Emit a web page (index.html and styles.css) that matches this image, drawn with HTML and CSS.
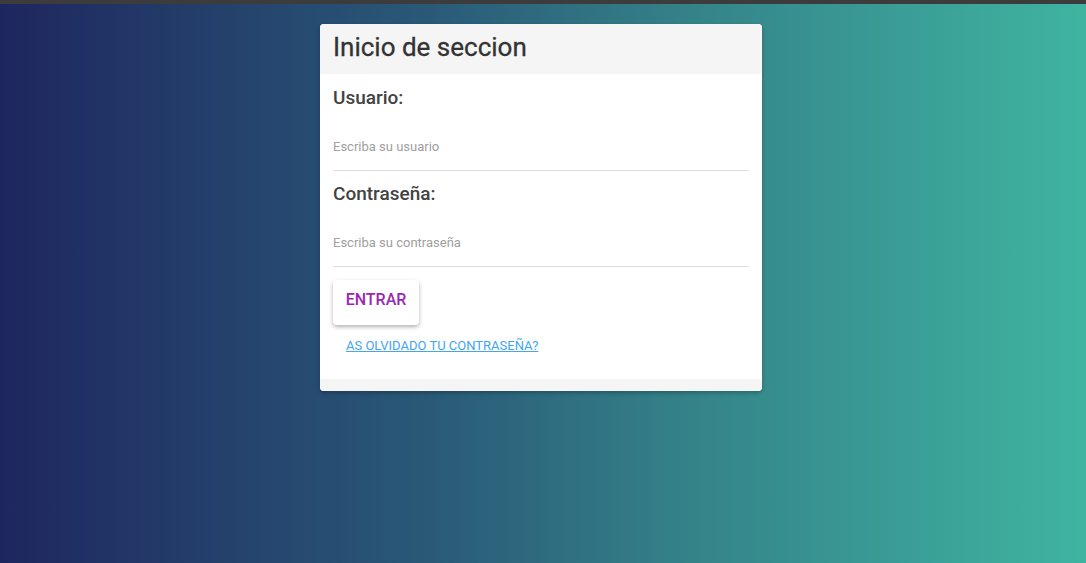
FILE: index.html
```html
<!DOCTYPE html>
<html lang="es">
<head>
<meta charset="utf-8">
<title>Inicio de seccion</title>
<link rel="stylesheet" href="styles.css">
</head>
<body>
<div class="topbar"></div>
<main class="stage">
  <form class="card">
    <header class="card-header">
      <h1 class="title">Inicio de seccion</h1>
    </header>
    <div class="card-body">
      <label class="label" for="u">Usuario:</label>
      <input class="field" id="u" type="text" placeholder="Escriba su usuario">
      <label class="label" for="p">Contraseña:</label>
      <input class="field" id="p" type="password" placeholder="Escriba su contraseña">
      <div class="actions"><button class="btn" type="button">ENTRAR</button></div>
      <a class="link" href="#">AS OLVIDADO TU CONTRASEÑA?</a>
    </div>
    <footer class="card-footer"></footer>
  </form>
</main>
</body>
</html>
```
FILE: styles.css
```css
* { box-sizing: border-box; }
html, body { height: 100%; }
body {
  margin: 0;
  font-family: Roboto, "Noto Sans", sans-serif;
  background: linear-gradient(to right, #1e265f 0%, #2a5a78 40%, #35858a 65%, #3fb4a1 100%);
  display: flex;
  flex-direction: column;
}
.topbar {
  height: 4px;
  background: #3c3c3c;
  flex: none;
}
.stage {
  display: flex;
  justify-content: center;
  padding-top: 20px;
  padding-right: 4px;
}
.card {
  width: 442px;
  background: #fff;
  border-radius: 4px;
  overflow: hidden;
  box-shadow: 0 2px 4px rgba(0,0,0,0.25);
  display: flex;
  flex-direction: column;
}
.card-header {
  background: #f5f5f5;
  height: 50px;
  padding: 0 13px 4px;
  display: flex;
  align-items: center;
}
.title {
  margin: 0;
  font-size: 26px;
  font-weight: 400;
  color: #333333;
  line-height: 1;
  -webkit-text-stroke: 0.3px #333333;
}
.card-body {
  padding: 13px 13px 25px;
  display: flex;
  flex-direction: column;
  align-items: flex-start;
}
.label {
  font-size: 19px;
  font-weight: 500;
  color: #424242;
  line-height: 22px;
}
.field {
  margin-top: 13px;
  width: 100%;
  height: 49px;
  border: none;
  border-bottom: 1px solid #e0e0e0;
  outline: none;
  padding: 0;
  font-family: inherit;
  font-size: 13px;
  color: #424242;
  background: transparent;
}
.field::placeholder { color: #a0a0a0; }
.field + .label { margin-top: 12px; }
.actions { margin-top: 13px; }
.btn {
  width: 86px;
  height: 45px;
  border: none;
  border-radius: 4px;
  background: #fff;
  box-shadow: 0 2px 4px rgba(0,0,0,0.3);
  color: #9c27b0;
  font-family: inherit;
  font-size: 16px;
  font-weight: 500;
  padding: 0 0 6px;
  cursor: pointer;
}
.link {
  margin-top: 13px;
  margin-left: 13px;
  font-size: 13px;
  line-height: 16px;
  color: #42a5f5;
  text-decoration: underline;
}
.card-footer {
  height: 12px;
  background: #f5f5f5;
}
```
